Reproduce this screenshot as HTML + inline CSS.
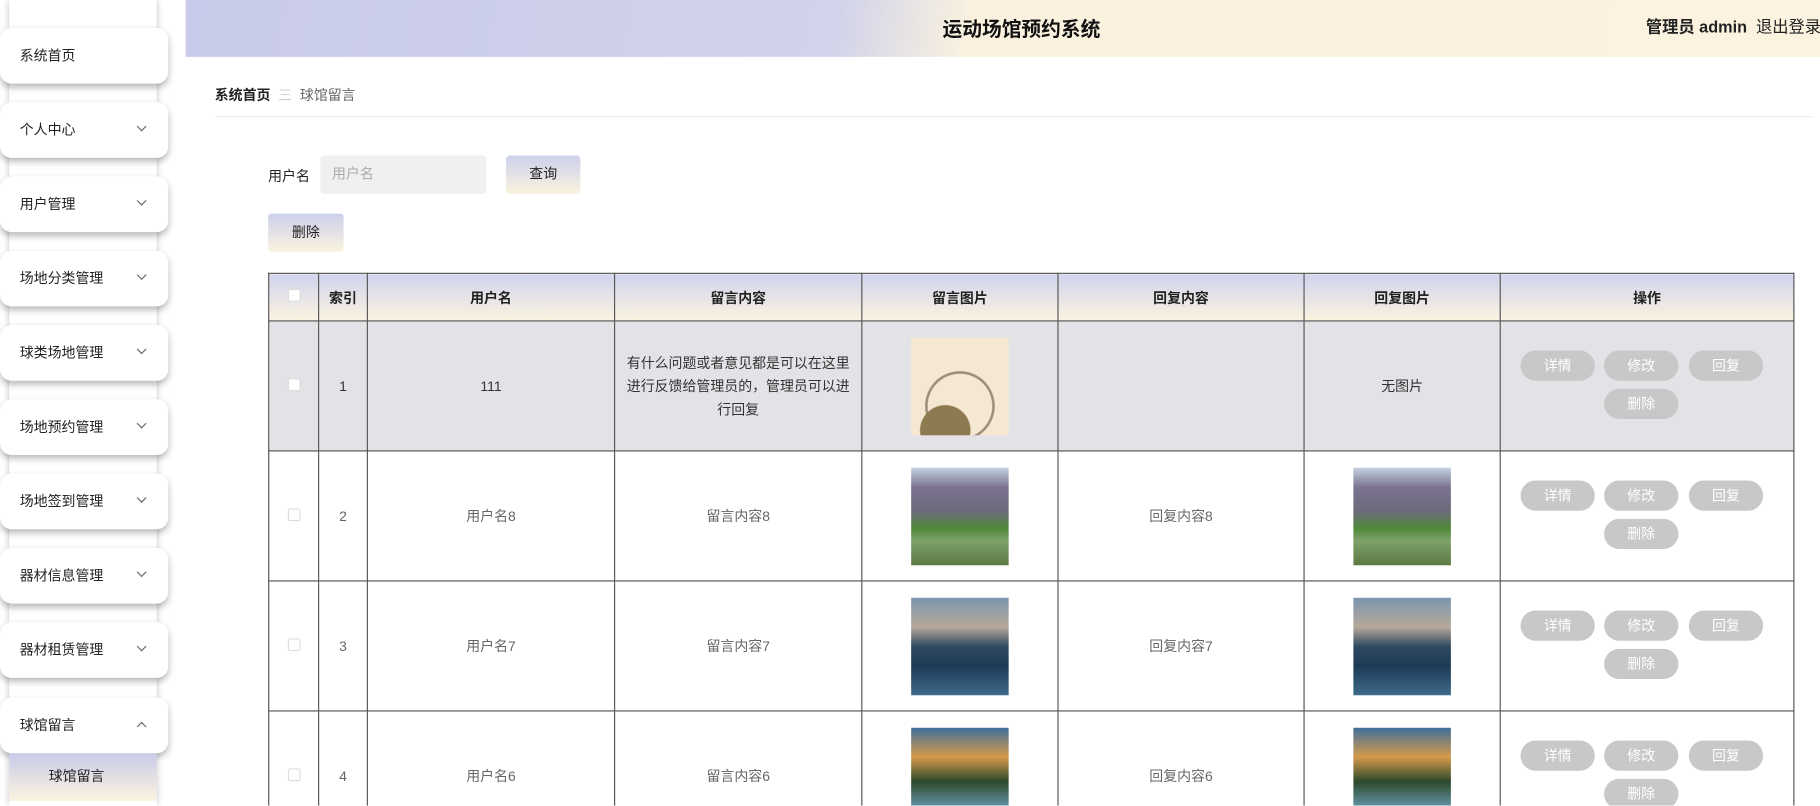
<!DOCTYPE html>
<html><head><meta charset="utf-8"><style>
*{margin:0;padding:0;box-sizing:border-box}
html,body{width:1820px;height:806px;overflow:hidden;background:#fff}
body{font-family:"Liberation Sans","Noto Sans CJK SC",sans-serif;color:#333}
#w{position:absolute;left:0;top:0;width:1568px;height:694px;transform:scale(1.16071);transform-origin:0 0;overflow:hidden}
.abs{position:absolute}
.strip{left:8px;top:0;width:127px;height:694px;background:#fff;box-shadow:0 0 6px rgba(0,0,0,.25)}
.card{left:0;width:145px;height:48px;background:#fff;border-radius:10px;box-shadow:0 3px 6px rgba(0,0,0,.28);font-size:12px;line-height:48px;padding-left:17px;color:#222}
.card i{position:absolute;right:20px;top:18px;width:6px;height:6px;border-right:1px solid #666;border-bottom:1px solid #666;transform:rotate(45deg)}
.card i.up{transform:rotate(-135deg);top:22px}
.sub{left:8px;top:649px;width:127px;height:41px;background:linear-gradient(#c9cbea,#fbf3df);font-size:12px;line-height:41px;color:#222;padding-left:34px}
.hdr{left:160px;top:0;width:1408px;height:49px;background:linear-gradient(100deg,#c8cbe9 0%,#d2d3ea 40%,#faf2df 48%,#fbf3df 100%)}
.btn{background:linear-gradient(#cdd0ec,#faf3df);border-radius:3px;font-size:12px;text-align:center;color:#222}
table{position:absolute;left:231px;top:235px;width:1314px;border-collapse:collapse;font-size:12px;table-layout:fixed}
td,th{border:1px solid #555;text-align:center;vertical-align:middle}
th{height:41px;background:linear-gradient(#d2d4ee,#fbf3df);font-weight:bold;color:#222}
td{height:112px;color:#666}
tr.h td{background:#e3e3e7;color:#333}
.cb{display:inline-block;width:11px;height:11px;border:1px solid #ddd;background:#fff;border-radius:2px}
.img{display:inline-block;width:84px;height:84px;vertical-align:middle}
.ops{position:relative;height:60px;margin-top:-10px}
.ops b{position:absolute;width:64px;height:26px;border-radius:13px;background:#c8c8c8;color:#fff;font-weight:normal;line-height:26px;font-size:12px}
</style></head><body><div id="w">
<div class="abs strip"></div>
<div class="abs card" style="top:24px">系统首页</div>
<div class="abs card" style="top:88px">个人中心<i></i></div>
<div class="abs card" style="top:152px">用户管理<i></i></div>
<div class="abs card" style="top:216px">场地分类管理<i></i></div>
<div class="abs card" style="top:280px">球类场地管理<i></i></div>
<div class="abs card" style="top:344px">场地预约管理<i></i></div>
<div class="abs card" style="top:408px">场地签到管理<i></i></div>
<div class="abs card" style="top:472px">器材信息管理<i></i></div>
<div class="abs card" style="top:536px">器材租赁管理<i></i></div>
<div class="abs card" style="top:601px">球馆留言<i class="up"></i></div>
<div class="abs sub">球馆留言</div>

<div class="abs hdr"></div>
<div class="abs" style="left:760px;top:11px;width:240px;text-align:center;font-size:17px;font-weight:bold;color:#111">运动场馆预约系统</div>
<div class="abs" style="left:1418px;top:13px;font-size:14px;font-weight:bold;color:#222;white-space:nowrap">管理员 admin <span style="font-weight:normal">&nbsp;退出登录</span></div>

<div class="abs" style="left:185px;top:73px;font-size:12px;white-space:nowrap"><b style="color:#222">系统首页</b> <span style="color:#ccc">&nbsp;三&nbsp;</span> <span style="color:#666">球馆留言</span></div>
<div class="abs" style="left:185px;top:100px;width:1377px;height:1px;background:#eee"></div>

<div class="abs" style="left:231px;top:143px;font-size:12px;color:#222">用户名</div>
<div class="abs" style="left:276px;top:134px;width:143px;height:33px;background:#f0eff2;border-radius:3px;font-size:12px;color:#aaa;line-height:33px;padding-left:10px">用户名</div>
<div class="abs btn" style="left:436px;top:134px;width:64px;height:33px;line-height:33px">查询</div>
<div class="abs btn" style="left:231px;top:184px;width:65px;height:33px;line-height:33px">删除</div>

<table>
<colgroup><col style="width:43px"><col style="width:42px"><col style="width:213px"><col style="width:213px"><col style="width:169px"><col style="width:212px"><col style="width:169px"><col style="width:253px"></colgroup>
<tr><th><span class="cb"></span></th><th>索引</th><th>用户名</th><th>留言内容</th><th>留言图片</th><th>回复内容</th><th>回复图片</th><th>操作</th></tr>
<tr class="h"><td><span class="cb"></span></td><td>1</td><td>111</td><td style="line-height:20px;padding:0 6px">有什么问题或者意见都是可以在这里进行反馈给管理员的，管理员可以进行回复</td><td><span class="img" style="background:radial-gradient(circle at 35% 95%,#8d7a50 0 22%,transparent 23%),radial-gradient(circle at 50% 70%,transparent 38%,#9a8e78 39% 41%,transparent 42%),#f5e8d3"></span></td><td></td><td>无图片</td><td><div class="ops"><b style="left:17px;top:4px">详情</b><b style="left:89px;top:4px">修改</b><b style="left:162px;top:4px">回复</b><b style="left:89px;top:37px">删除</b></div></td></tr>
<tr><td><span class="cb"></span></td><td>2</td><td>用户名8</td><td>留言内容8</td><td><span class="img" style="background:linear-gradient(#c4d2e0 0%,#7b7390 20%,#6c6a78 45%,#4f8a3a 62%,#7ea06a 75%,#5d7a42 100%)"></span></td><td>回复内容8</td><td><span class="img" style="background:linear-gradient(#c4d2e0 0%,#7b7390 20%,#6c6a78 45%,#4f8a3a 62%,#7ea06a 75%,#5d7a42 100%)"></span></td><td><div class="ops"><b style="left:17px;top:4px">详情</b><b style="left:89px;top:4px">修改</b><b style="left:162px;top:4px">回复</b><b style="left:89px;top:37px">删除</b></div></td></tr>
<tr><td><span class="cb"></span></td><td>3</td><td>用户名7</td><td>留言内容7</td><td><span class="img" style="background:linear-gradient(#7d95b0 0%,#b6a99a 30%,#2f4960 50%,#1d3a55 70%,#3d6b8a 100%)"></span></td><td>回复内容7</td><td><span class="img" style="background:linear-gradient(#7d95b0 0%,#b6a99a 30%,#2f4960 50%,#1d3a55 70%,#3d6b8a 100%)"></span></td><td><div class="ops"><b style="left:17px;top:4px">详情</b><b style="left:89px;top:4px">修改</b><b style="left:162px;top:4px">回复</b><b style="left:89px;top:37px">删除</b></div></td></tr>
<tr><td><span class="cb"></span></td><td>4</td><td>用户名6</td><td>留言内容6</td><td><span class="img" style="background:linear-gradient(#3f6f9a 0%,#d59a4a 30%,#2e4a2a 55%,#5e8fa0 80%,#c08a4a 100%)"></span></td><td>回复内容6</td><td><span class="img" style="background:linear-gradient(#3f6f9a 0%,#d59a4a 30%,#2e4a2a 55%,#5e8fa0 80%,#c08a4a 100%)"></span></td><td><div class="ops"><b style="left:17px;top:4px">详情</b><b style="left:89px;top:4px">修改</b><b style="left:162px;top:4px">回复</b><b style="left:89px;top:37px">删除</b></div></td></tr>
</table>
</div></body></html>
